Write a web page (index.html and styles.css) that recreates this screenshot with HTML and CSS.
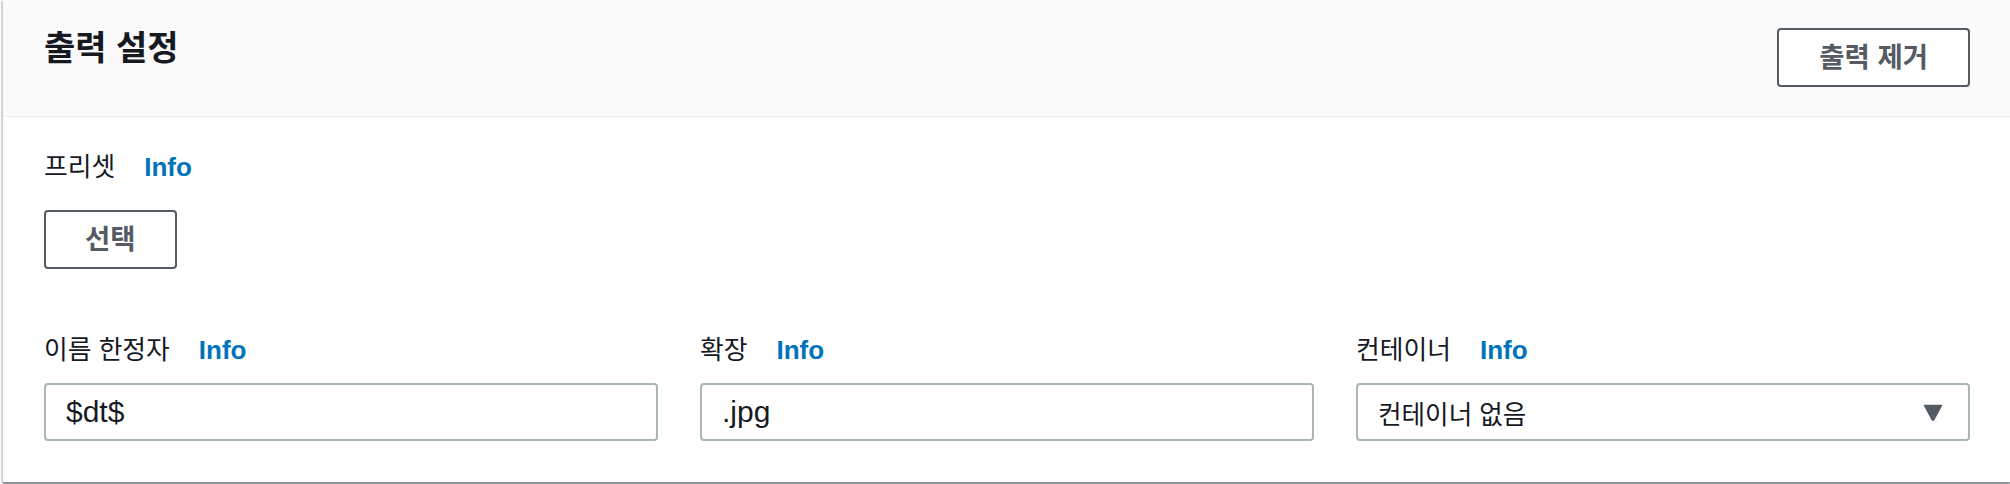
FILE: index.html
```html
<!DOCTYPE html>
<html lang="ko">
<head>
<meta charset="utf-8">
<title>출력 설정</title>
<link rel="stylesheet" href="styles.css">
</head>
<body>
<section class="panel">
  <header class="panel-header">
    <h2 class="panel-title">출력 설정</h2>
    <button class="btn" type="button">출력 제거</button>
  </header>
  <div class="panel-body">
    <div class="field-label"><span>프리셋</span><a class="info" href="#">Info</a></div>
    <button class="btn btn-select" type="button">선택</button>
    <div class="field-grid">
      <div class="field">
        <div class="field-label"><span>이름 한정자</span><a class="info" href="#">Info</a></div>
        <div class="input latin">$dt$</div>
      </div>
      <div class="field">
        <div class="field-label"><span>확장</span><a class="info" href="#">Info</a></div>
        <div class="input latin">.jpg</div>
      </div>
      <div class="field">
        <div class="field-label"><span>컨테이너</span><a class="info" href="#">Info</a></div>
        <div class="input select">
          <span>컨테이너 없음</span>
          <svg class="caret" width="20" height="17" viewBox="0 0 20 17"><path d="M1.5 1.5 L18.5 1.5 L10.8 15.6 Q10 16.8 9.2 15.6 Z" fill="#545b64" stroke="#545b64" stroke-width="1.5" stroke-linejoin="round"/></svg>
        </div>
      </div>
    </div>
  </div>
</section>
</body>
</html>
```

FILE: styles.css
```css
html, body {
  margin: 0;
  padding: 0;
  background: #ffffff;
}

body {
  font-family: "Liberation Sans", "Noto Sans CJK KR", sans-serif;
  color: #16191f;
  width: 2010px;
  height: 484px;
  overflow: hidden;
}

.panel {
  margin-left: 3px;
  width: calc(100% - 3px);
  height: 482px;
  box-sizing: border-box;
  background: #ffffff;
  box-shadow: 0 2px 1px rgba(0, 28, 36, 0.4), -2px 1px 1px rgba(0, 28, 36, 0.15);
  display: flex;
  flex-direction: column;
}

.panel-header {
  display: flex;
  justify-content: space-between;
  align-items: flex-start;
  background: #fafafa;
  border-bottom: 1px solid #eaeded;
  padding: 28px 40px 29px 41px;
  height: 117px;
  box-sizing: border-box;
}

.panel-title {
  margin: 0;
  font-size: 34px;
  line-height: 40px;
  font-weight: 700;
  color: #16191f;
}

.btn {
  font-family: "Liberation Sans", "Noto Sans CJK KR", sans-serif;
  font-size: 27.5px;
  font-weight: 700;
  color: #545b64;
  background: #ffffff;
  border: 2px solid #545b64;
  border-radius: 4px;
  height: 59px;
  padding: 0 40px;
  box-sizing: border-box;
  line-height: 1;
  cursor: pointer;
}

.panel-body {
  padding: 33px 40px 0 41px;
  display: flex;
  flex-direction: column;
  align-items: flex-start;
}

.field-label {
  display: flex;
  align-items: baseline;
  font-size: 25.8px;
  line-height: 35px;
  color: #16191f;
}

.info {
  margin-left: 29px;
  font-size: 26px;
  font-weight: 700;
  color: #0073bb;
  text-decoration: none;
}

.btn-select {
  margin-top: 25px;
  padding: 0 39px;
}

.field-grid {
  align-self: stretch;
  margin-top: 64px;
  display: grid;
  grid-template-columns: repeat(3, 1fr);
  column-gap: 42px;
}

.field {
  display: flex;
  flex-direction: column;
  gap: 15px;
}

.input {
  height: 58px;
  box-sizing: border-box;
  border: 2px solid #aab7b8;
  border-radius: 4px;
  padding: 0 24px 0 20px;
  display: flex;
  align-items: center;
  color: #16191f;
  font-size: 25.6px;
  background: #ffffff;
}

.input.latin {
  font-size: 30px;
}

.input.select {
  justify-content: space-between;
}

.caret {
  display: block;
  margin-right: 1px;
}
```
